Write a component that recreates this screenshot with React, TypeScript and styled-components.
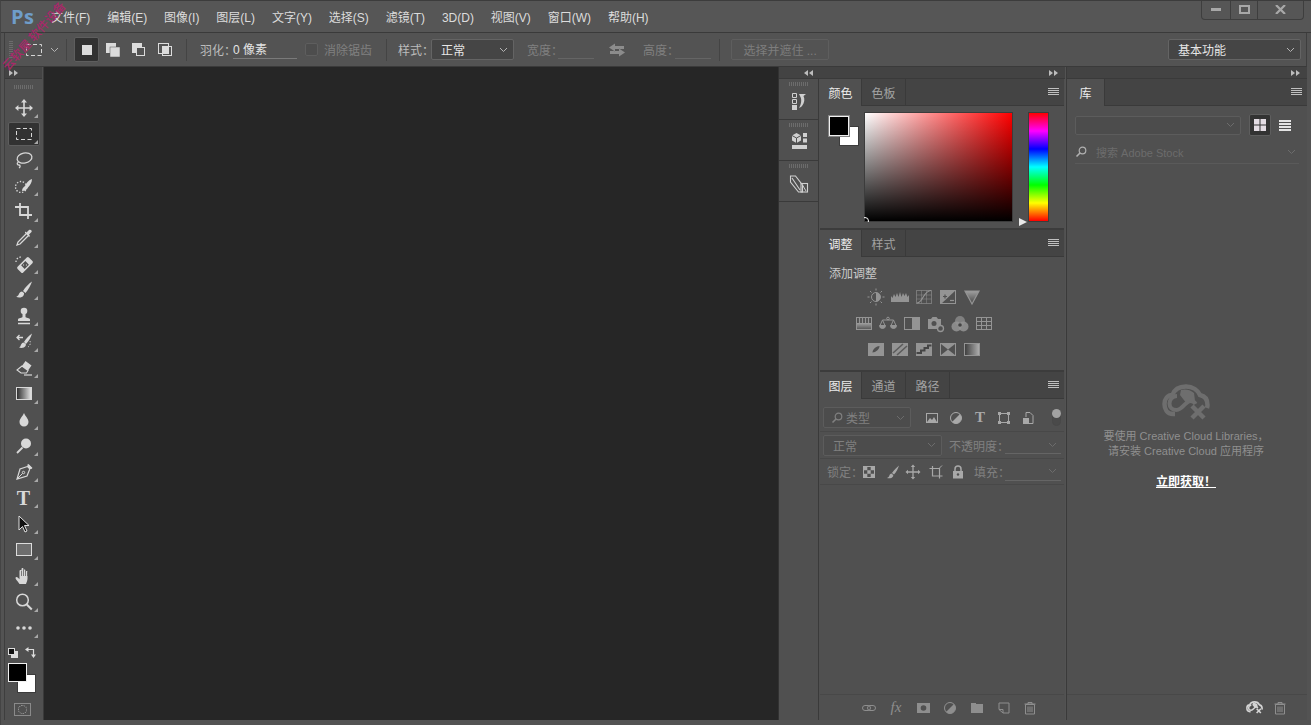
import React from "react";
import styled, { createGlobalStyle } from "styled-components";

const GlobalStyle = createGlobalStyle`
  html, body {
    margin: 0;
    padding: 0;
    background: #535353;
  }
  * {
    box-sizing: border-box;
  }
`;

const uiFont = `"Liberation Sans", "Noto Sans CJK SC", sans-serif`;
const panelBg = "#505050";

const Window = styled.div`
  position: relative;
  width: 1311px;
  height: 725px;
  overflow: hidden;
  display: flex;
  flex-direction: column;
  background: #535353;
  border-top: 1px solid #3c3c3c;
  border-left: 1px solid #444;
  font-family: ${uiFont};
  font-size: 12px;
  color: #d6d6d6;
`;

const Watermark = styled.div<{ $x: number; $y: number }>`
  position: absolute;
  left: ${(p) => p.$x}px;
  top: ${(p) => p.$y}px;
  transform: rotate(-48deg);
  transform-origin: left center;
  font-size: 12px;
  font-weight: 500;
  white-space: nowrap;
  color: #a8286a;
  z-index: 5;
`;

const TitleBar = styled.div`
  position: relative;
  height: 32px;
  flex: none;
  display: flex;
  align-items: center;
  padding-left: 10px;
  border-bottom: 1px solid #3a3a3a;
  background: #565656;
`;

const Logo = styled.span`
  width: 40px;
  font-family: "Open Sans", "Liberation Sans", sans-serif;
  font-size: 20px;
  font-weight: 700;
  letter-spacing: 0.5px;
  color: #6f9dc9;
`;

const Menu = styled.nav`
  display: flex;
  align-items: baseline;
  gap: 16.9px;
  color: #dcdcdc;
`;

const WindowControls = styled.div`
  position: absolute;
  top: -1px;
  right: 7px;
  display: flex;
  height: 20px;
  border: 1px solid #3e3e3e;
  border-top: 0;
  border-radius: 0 0 4px 4px;
`;

const WindowControl = styled.div<{ $w: number }>`
  width: ${(p) => p.$w}px;
  display: flex;
  align-items: center;
  justify-content: center;
  color: #a8a8a8;
  & + & {
    border-left: 1px solid #3e3e3e;
  }
`;

const OptionsBar = styled.div`
  height: 34px;
  flex: none;
  margin: 0 4px 0 3px;
  display: flex;
  align-items: center;
  padding-left: 4px;
  border-left: 1px solid #3e3e3e;
  border-right: 1px solid #3e3e3e;
  border-bottom: 1px solid #3a3a3a;
  background: #535353;
  position: relative;
`;

const Grip = styled.div<{ $vertical?: boolean }>`
  flex: none;
  background-image: repeating-linear-gradient(
    ${(p) => (p.$vertical ? "to bottom" : "to right")},
    #6c6c6c 0 1px,
    transparent 1px 2px
  );
  width: ${(p) => (p.$vertical ? "4px" : "20px")};
  height: ${(p) => (p.$vertical ? "17px" : "4px")};
`;

const Spaced = styled.div<{ $left: number; $w?: number }>`
  flex: none;
  margin-left: ${(p) => p.$left}px;
  width: ${(p) => (p.$w ? `${p.$w}px` : "auto")};
  display: flex;
  align-items: center;
  justify-content: center;
`;

const Separator = styled.div<{ $left: number }>`
  flex: none;
  width: 1px;
  height: 22px;
  margin-left: ${(p) => p.$left}px;
  background: #444;
`;

const ModeButton = styled.div<{ $active?: boolean; $left: number }>`
  width: ${(p) => (p.$active ? 25 : 26)}px;
  height: 25px;
  flex: none;
  margin-left: ${(p) => p.$left}px;
  display: flex;
  align-items: center;
  justify-content: center;
  color: #dcdcdc;
  border-radius: 2px;
  background: ${(p) => (p.$active ? "#323232" : "transparent")};
  border: 1px solid ${(p) => (p.$active ? "#5e5e5e" : "transparent")};
`;

const Label = styled.span<{ $left?: number; $dim?: boolean }>`
  flex: none;
  margin-left: ${(p) => p.$left ?? 0}px;
  color: ${(p) => (p.$dim ? "#808080" : "#bcbcbc")};
  white-space: nowrap;
`;

const UnderInput = styled.div<{ $w: number; $left: number; $dim?: boolean }>`
  flex: none;
  width: ${(p) => p.$w}px;
  height: 18px;
  margin-left: ${(p) => p.$left}px;
  line-height: 19px;
  color: #e4e4e4;
  border-bottom: 1px solid ${(p) => (p.$dim ? "#656565" : "#7a7a7a")};
`;

const ChevronInput = styled(UnderInput)`
  display: flex;
  justify-content: flex-end;
  align-items: center;
  padding-right: 4px;
`;

const Checkbox = styled.div<{ $left: number }>`
  flex: none;
  width: 13px;
  height: 13px;
  margin-left: ${(p) => p.$left}px;
  border: 1px solid #5e5e5e;
  border-radius: 2px;
  background: #4d4d4d;
`;

const Select = styled.div<{ $w: number; $left?: number; $h?: number; $dim?: boolean; $pad?: number }>`
  flex: none;
  width: ${(p) => p.$w}px;
  height: ${(p) => p.$h ?? 21}px;
  margin-left: ${(p) => p.$left ?? 0}px;
  padding: 0 5px 0 ${(p) => p.$pad ?? 9}px;
  display: flex;
  align-items: center;
  justify-content: space-between;
  color: ${(p) => (p.$dim ? "#808080" : "#e6e6e6")};
  background: ${(p) => (p.$dim ? "#4c4c4c" : "#454545")};
  border: 1px solid ${(p) => (p.$dim ? "#5c5c5c" : "#646464")};
  border-radius: 2px;
`;

const GhostButton = styled.div`
  flex: none;
  width: 98px;
  height: 21px;
  margin-left: 11px;
  display: flex;
  align-items: center;
  justify-content: center;
  color: #7d7d7d;
  border: 1px solid #5e5e5e;
  border-radius: 2px;
`;

const WorkspaceSelect = styled(Select)`
  margin-left: auto;
  margin-right: 5px;
`;

const Body = styled.div`
  height: 653px;
  flex: none;
  margin: 0 4px 0 3px;
  display: flex;
  border-left: 1px solid #3e3e3e;
`;

const ToolColumn = styled.div`
  width: 39px;
  flex: none;
  display: flex;
  flex-direction: column;
  align-items: center;
  padding-right: 1px;
  border-right: 1px solid #3a3a3a;
  background: ${panelBg};
`;

const DockStrip = styled.div<{ $align?: string; $left?: number }>`
  height: 12px;
  width: 100%;
  flex: none;
  display: flex;
  align-items: center;
  justify-content: ${(p) => p.$align ?? "flex-end"};
  padding: 0 7px 0 ${(p) => p.$left ?? 4}px;
  background: #434343;
  border-bottom: 1px solid #3a3a3a;
  color: #bdbdbd;
`;

const GripRow = styled.div`
  height: 16px;
  flex: none;
  display: flex;
  align-items: center;
  justify-content: center;
  width: 100%;
`;

const ToolButton = styled.div<{ $active?: boolean }>`
  position: relative;
  width: 32px;
  height: 24px;
  margin: 1px 0;
  flex: none;
  display: flex;
  align-items: center;
  justify-content: center;
  color: #d8d8d8;
  border-radius: 2px;
  background: ${(p) => (p.$active ? "#323232" : "transparent")};
  border: 1px solid ${(p) => (p.$active ? "#5e5e5e" : "transparent")};
  &::after {
    content: "";
    position: absolute;
    right: 1px;
    bottom: 1px;
    border-style: solid;
    border-width: 0 0 4px 4px;
    border-color: transparent transparent #a8a8a8 transparent;
  }
`;

const TypeGlyph = styled.span<{ $size?: number }>`
  font-family: "Liberation Serif", serif;
  font-size: ${(p) => p.$size ?? 20}px;
  font-weight: 700;
  line-height: 1;
`;

const SwapRow = styled.div`
  width: 100%;
  height: 21px;
  margin-top: 1px;
  padding: 0 6px 0 3px;
  flex: none;
  display: flex;
  align-items: center;
  justify-content: space-between;
`;

const SwatchStack = styled.div`
  position: relative;
  width: 30px;
  height: 31px;
  flex: none;
  margin: 0 0 0 -5px;
`;

const Swatch = styled.div<{ $bg: string; $x: number; $y: number; $size: number; $edge: string; $halo?: boolean }>`
  position: absolute;
  left: ${(p) => p.$x}px;
  top: ${(p) => p.$y}px;
  width: ${(p) => p.$size}px;
  height: ${(p) => p.$size}px;
  background: ${(p) => p.$bg};
  border: 1px solid ${(p) => p.$edge};
  box-shadow: ${(p) => (p.$halo ? "0 0 0 1px #858585" : "none")};
`;

const QuickMask = styled.div`
  width: 17px;
  height: 13px;
  flex: none;
  margin: 9px 3px 0 0;
  display: flex;
  align-items: center;
  justify-content: center;
  border: 1px solid #8a8a8a;
  & > div {
    width: 9px;
    height: 9px;
    border: 1px dotted #a8a8a8;
    border-radius: 50%;
  }
`;

const Canvas = styled.div`
  width: 735px;
  flex: none;
  background: #262626;
  border-right: 1px solid #323232;
`;

const DockGroup = styled.div<{ $w: number; $split?: boolean }>`
  width: ${(p) => p.$w}px;
  flex: none;
  display: flex;
  flex-direction: column;
  background: ${panelBg};
  margin-left: ${(p) => (p.$split ? 1 : 0)}px;
  border-left: ${(p) => (p.$split ? "1px solid #3a3a3a" : "0")};
`;

const DockRow = styled.div`
  flex: 1;
  display: flex;
  min-height: 0;
`;

const IconColumn = styled.div`
  width: 40px;
  flex: none;
  display: flex;
  flex-direction: column;
  border-right: 1px solid #3a3a3a;
`;

const IconCell = styled.div<{ $gap: number }>`
  height: 41px;
  flex: none;
  display: flex;
  flex-direction: column;
  align-items: center;
  border-bottom: 1px solid #3a3a3a;
  padding-top: 3px;
  color: #d0d0d0;
  & > svg {
    margin-top: ${(p) => p.$gap}px;
  }
`;

const PanelStack = styled.div`
  width: 244px;
  margin-left: 1px;
  flex: none;
  display: flex;
  flex-direction: column;
  gap: 2px;
  background: #3c3c3c;
`;

const Panel = styled.section<{ $h?: number }>`
  flex: ${(p) => (p.$h ? `0 0 ${p.$h}px` : "1")};
  min-height: 0;
  display: flex;
  flex-direction: column;
  background: ${panelBg};
`;

const TabStrip = styled.div`
  height: 27px;
  flex: none;
  display: flex;
  align-items: stretch;
  background: #444;
  border-bottom: 1px solid #3a3a3a;
`;

const Tab = styled.div<{ $active?: boolean; $w?: number }>`
  width: ${(p) => p.$w ?? (p.$active ? 42 : 44)}px;
  height: ${(p) => (p.$active ? 27 : 26)}px;
  flex: none;
  display: flex;
  align-items: center;
  justify-content: center;
  color: ${(p) => (p.$active ? "#ececec" : "#a2a2a2")};
  background: ${(p) => (p.$active ? panelBg : "transparent")};
  border-right: 1px solid #3a3a3a;
`;

const MenuButton = styled.div`
  margin-left: auto;
  width: 22px;
  display: flex;
  align-items: center;
  justify-content: center;
  color: #c0c0c0;
`;

const ColorBody = styled.div`
  flex: 1;
  display: flex;
  align-items: flex-start;
  padding: 6px 0 0 9px;
`;

const ColorSwatches = styled.div`
  position: relative;
  width: 29px;
  height: 34px;
  margin-top: 4px;
  flex: none;
`;

const ColorField = styled.div`
  position: relative;
  width: 149px;
  height: 110px;
  flex: none;
  margin-left: 6px;
  background: linear-gradient(to top, #000, rgba(0, 0, 0, 0)), linear-gradient(to right, #fff, #f00);
  border: 1px solid #3c3c3c;
`;

const FieldPicker = styled.div`
  position: absolute;
  left: -4px;
  bottom: -4px;
  width: 8px;
  height: 8px;
  border: 1px solid #fff;
  border-radius: 50%;
  clip-path: inset(0 0 3px 3px);
`;

const HueBar = styled.div`
  position: relative;
  width: 21px;
  height: 110px;
  flex: none;
  margin-left: 15px;
  border: 1px solid #3c3c3c;
  background: linear-gradient(to bottom, #f00, #f0f, #00f, #0ff, #0f0, #ff0, #f00);
`;

const HuePicker = styled.div`
  position: absolute;
  left: -10px;
  bottom: -5px;
  border-style: solid;
  border-width: 4px 0 4px 8px;
  border-color: transparent transparent transparent #e8e8e8;
`;

const AdjustTitle = styled.div`
  padding: 7px 0 0 9px;
  height: 27px;
  flex: none;
  color: #cacaca;
`;

const AdjustRow = styled.div`
  width: 208px;
  height: 26.5px;
  flex: none;
  display: flex;
  align-items: center;
  justify-content: center;
  color: #949494;
`;

const AdjustIcon = styled.div`
  width: 24px;
  display: flex;
  justify-content: center;
`;

const LayerRow = styled.div<{ $h: number; $top?: number }>`
  height: ${(p) => p.$h}px;
  flex: none;
  display: flex;
  align-items: center;
  padding: ${(p) => p.$top ?? 0}px 0 0 3px;
  color: #a8a8a8;
  border-bottom: 1px solid #484848;
`;

const FilterIcon = styled.div<{ $left?: number }>`
  width: 24px;
  flex: none;
  margin-left: ${(p) => p.$left ?? 0}px;
  display: flex;
  justify-content: center;
  color: #a8a8a8;
`;

const Toggle = styled.div`
  position: relative;
  width: 9px;
  height: 17px;
  margin-left: 12px;
  border: 1px solid #484848;
  border-radius: 5px;
  background: #4a4a4a;
  &::before {
    content: "";
    position: absolute;
    top: -1px;
    left: -1px;
    width: 9px;
    height: 9px;
    border-radius: 50%;
    background: #a2a2a2;
  }
`;

const Spacer = styled.div`
  flex: 1;
`;

const PanelFooter = styled.div<{ $pad: number; $gap: number }>`
  height: 26px;
  flex: none;
  display: flex;
  align-items: center;
  justify-content: flex-end;
  gap: ${(p) => p.$gap}px;
  padding-right: ${(p) => p.$pad}px;
  border-top: 1px solid #484848;
  color: #8e8e8e;
`;

const FooterFx = styled.span`
  width: 16px;
  text-align: center;
  font-family: "Liberation Serif", serif;
  font-size: 15px;
  font-style: italic;
`;

const LibraryBody = styled.div`
  flex: 1;
  display: flex;
  flex-direction: column;
  padding: 8px 8px 0 8px;
  min-height: 0;
`;

const LibraryTop = styled.div`
  display: flex;
  align-items: center;
  height: 22px;
  flex: none;
`;

const ViewButton = styled.div<{ $active?: boolean; $left: number }>`
  width: 22px;
  height: 22px;
  flex: none;
  margin-left: ${(p) => p.$left}px;
  display: flex;
  align-items: center;
  justify-content: center;
  color: #e6e6e6;
  border-radius: 2px;
  background: ${(p) => (p.$active ? "#333" : "transparent")};
  border: 1px solid ${(p) => (p.$active ? "#5e5e5e" : "transparent")};
`;

const StockSearch = styled.div`
  height: 23px;
  margin-top: 5px;
  width: 224px;
  flex: none;
  display: flex;
  align-items: center;
  padding-right: 3px;
  color: #6c6c6c;
  font-size: 11px;
  border-bottom: 1px solid #5a5a5a;
  & > svg:first-child {
    color: #b0b0b0;
  }
`;

const StockText = styled.span`
  margin-left: 9px;
  flex: 1;
`;

const EmptyLibrary = styled.div`
  flex: 1;
  display: flex;
  flex-direction: column;
  align-items: center;
  padding-top: 220px;
  margin-right: 2px;
  color: #8f8f8f;
  font-size: 11px;
  line-height: 15px;
  text-align: center;
`;

const CloudBox = styled.div<{ $tone: string }>`
  color: ${(p) => p.$tone};
`;

const EmptyText = styled.div`
  margin-top: 9px;
  white-space: nowrap;
`;

const GetLink = styled.a`
  margin-top: 16px;
  font-size: 12px;
  font-weight: 700;
  color: #fff;
  text-decoration: underline;
`;

type GlyphProps = { s?: number; w?: number; children: React.ReactNode };

const G = ({ s = 20, w, children }: GlyphProps) => (
  <svg
    width={w ?? s}
    height={s}
    viewBox={`0 0 ${w ?? s} ${s}`}
    fill="none"
    stroke="currentColor"
    strokeWidth={1}
    style={{ display: "block", flex: "none" }}
  >
    {children}
  </svg>
);

const Chevron = ({ dim }: { dim?: boolean }) => (
  <svg width="9" height="6" viewBox="0 0 9 6" fill="none" stroke={dim ? "#6c6c6c" : "#b4b4b4"} style={{ flex: "none" }}>
    <path d="M1 1l3.5 3.5L8 1" />
  </svg>
);

const Collapse = ({ left }: { left?: boolean }) => (
  <svg width="9" height="6" viewBox="0 0 9 6" fill="currentColor" style={{ flex: "none" }}>
    {left ? <path d="M4 0v6L0 3zM9 0v6L5 3z" /> : <path d="M0 0v6l4-3zM5 0v6l4-3z" />}
  </svg>
);

const Hamburger = () => (
  <svg width="11" height="8" viewBox="0 0 11 8" fill="none" stroke="currentColor">
    <path d="M0 .5h11M0 2.500h11M0 4.500h11M0 6.500h11" />
  </svg>
);

const Marquee = () => (
  <G s={18}>
    <rect x="1.5" y="3.5" width="15" height="11" strokeDasharray="4 2.5" />
  </G>
);

const f = "currentColor";

const tools: { key: string; icon: React.ReactNode; active?: boolean }[] = [
  {
    key: "move",
    icon: (
      <G>
        <path d="M10 3v14M3 10h14" strokeWidth={1.6} />
        <path d="M10 1l3 3.4H7zM10 19l3-3.4H7zM1 10l3.4-3v6zM19 10l-3.4-3v6z" fill={f} stroke="none" />
      </G>
    ),
  },
  { key: "marquee", active: true, icon: <Marquee /> },
  {
    key: "lasso",
    icon: (
      <G>
        <ellipse cx="10.5" cy="8" rx="7.5" ry="5" strokeWidth={1.3} transform="rotate(-12 10.5 8)" />
        <path d="M4.5 12c-2 1-1.5 3 .5 3 1.5 0 1.5 2 0 3" strokeWidth={1.3} />
      </G>
    ),
  },
  {
    key: "quick",
    icon: (
      <G>
        <circle cx="7" cy="11" r="5.5" strokeDasharray="1.4 1.6" strokeWidth={1.3} />
        <path d="M18 3c-3 1-6 4-7 7-1 1-3 2-3 5 3 0 5-1.5 6-3.5 2-2 4-5 4-8.500z" fill={f} stroke="none" />
      </G>
    ),
  },
  {
    key: "crop",
    icon: (
      <G>
        <path d="M6 2v12h12M1 6h13v12" strokeWidth={1.8} transform="translate(0 -1)" />
      </G>
    ),
  },
  {
    key: "dropper",
    icon: (
      <G>
        <path d="M12 6L4 14l-1 3 3-1 8-8" strokeWidth={1.3} />
        <path d="M11 5l4 4 1-1-1-1.500 2.500-2.500c1-1.500-1-3-2.500-2L12.500 4.500 11 3.500z" fill={f} stroke="none" />
      </G>
    ),
  },
  {
    key: "heal",
    icon: (
      <G>
        <g transform="rotate(-45 11 11)">
          <rect x="3" y="7" width="16" height="8" rx="1.500" fill={f} stroke="none" />
          <rect x="8" y="8.500" width="6" height="5" fill={panelBg} stroke="none" />
          <path d="M9.500 9.500h1v1h-1zM11.500 11.500h1v1h-1z" fill={f} stroke="none" />
        </g>
        <path d="M2 8a5 5 0 0 1 5-5" strokeDasharray="1.400 1.600" strokeWidth={1.3} />
      </G>
    ),
  },
  {
    key: "brush",
    icon: (
      <G>
        <path d="M18 1.500c-3 2-7 6-9 9.500l2.500 2C14 10 17 5 18 1.500zM8 11.500c-2.500.5-3 2.500-3.500 3.500-.4.800-1.500 1.500-2.500 1.500 2 1.500 6 1.500 7.500-1 .6-1 .6-2 .5-2.500z" fill={f} stroke="none" />
      </G>
    ),
  },
  {
    key: "stamp",
    icon: (
      <G>
        <circle cx="10" cy="5" r="3.300" fill={f} stroke="none" />
        <path d="M8.500 7.500h3v3.500c0 1 4.500 1 4.500 2.500V15H4v-1.500c0-1.500 4.500-1.500 4.500-2.500z" fill={f} stroke="none" />
        <path d="M4 17.500h12" strokeWidth={1.500} />
      </G>
    ),
  },
  {
    key: "history",
    icon: (
      <G>
        <path d="M18 1.500c-3 2-6 5-8 8.500l2 2c3-3 5-7 6-10.500zM9.500 10.500c-2 .5-2.500 2-3 3.500-.3.800-.8 1-1.500 1.500 2 1 5.500.5 6.500-1.500.4-.8.400-1.500.3-2z" fill={f} stroke="none" />
        <path d="M9 5.500H3.500M5.500 3L3 5.500 5.500 8" strokeWidth={1.300} />
        <path d="M16 9a5 5 0 0 1-2 6" strokeDasharray="1.300 1.500" />
      </G>
    ),
  },
  {
    key: "eraser",
    icon: (
      <G>
        <path d="M11.500 3l6 4.500-3.500 5-6-4.500z" fill={f} stroke="none" />
        <path d="M8 8l6 4.500-1.500 2.500H7L3 12z" strokeWidth={1.100} />
        <path d="M10 17h8" strokeWidth={1.200} />
      </G>
    ),
  },
  {
    key: "gradient",
    icon: (
      <G>
        <defs>
          <linearGradient id="toolGrad" x1="0" x2="1" y1="0" y2="0">
            <stop offset="0" stopColor="#2a2a2a" />
            <stop offset="1" stopColor="#e8e8e8" />
          </linearGradient>
        </defs>
        <rect x="2.500" y="3.500" width="15" height="12" fill="url(#toolGrad)" stroke="#d8d8d8" />
      </G>
    ),
  },
  {
    key: "blur",
    icon: (
      <G>
        <path d="M10 3c-1 3-4.500 5.500-4.500 9a4.500 4.500 0 0 0 9 0C14.500 8.500 11 6 10 3z" fill={f} stroke="none" />
      </G>
    ),
  },
  {
    key: "dodge",
    icon: (
      <G>
        <circle cx="12" cy="7.500" r="5" fill={f} stroke="none" />
        <path d="M8.500 11.500L3 17" strokeWidth={1.800} />
      </G>
    ),
  },
  {
    key: "pen",
    icon: (
      <G>
        <path d="M14.500 3.500l3 3M14 5l2 2M13.500 4.500L6 7 3 17l10-3 3-7.500z" strokeWidth={1.200} />
        <path d="M3.500 16.500L8.500 11.500" />
        <circle cx="9.500" cy="10.500" r="1.200" />
        <path d="M14.500 2l4 4-1.500 1-4-4z" fill={f} stroke="none" />
      </G>
    ),
  },
  { key: "type", icon: <TypeGlyph>T</TypeGlyph> },
  {
    key: "path",
    icon: (
      <G>
        <path d="M5 2v14l3.500-3.500L11 18l2-1-2.500-5.500H15z" fill="#111" stroke="#e0e0e0" />
      </G>
    ),
  },
  {
    key: "shape",
    icon: (
      <G>
        <rect x="2.500" y="3.500" width="15" height="12" fill="#6e6e6e" stroke="#dcdcdc" />
      </G>
    ),
  },
  {
    key: "hand",
    icon: (
      <G>
        <path d="M5.500 18c-1-2-4-4.500-4-6 0-1.200 1.500-1.200 2.500-.3l1.500 1.500V5c0-1.500 2-1.500 2 0V3c0-1.500 2-1.500 2 0v1.500c0-1.500 2-1.500 2 0V6c0-1.500 2-1.500 2 0v6.500c0 2-1 4-1.500 5.500z" fill={f} stroke="none" />
        <path d="M7.500 5v5M9.500 3.500v6.500M11.500 4.500v5.500M13.500 6v4" stroke={panelBg} strokeWidth={0.700} />
      </G>
    ),
  },
  {
    key: "zoom",
    icon: (
      <G>
        <circle cx="8.500" cy="8" r="5.800" strokeWidth={1.500} />
        <path d="M12.800 12.500l5 5" strokeWidth={2} />
      </G>
    ),
  },
  {
    key: "more",
    icon: (
      <G>
        <circle cx="4" cy="10" r="1.800" fill={f} stroke="none" />
        <circle cx="10" cy="10" r="1.800" fill={f} stroke="none" />
        <circle cx="16" cy="10" r="1.800" fill={f} stroke="none" />
      </G>
    ),
  },
];

const adjustRows: { key: string; icon: React.ReactNode }[][] = [
  [
    {
      key: "brightness",
      icon: (
        <G>
          <circle cx="10" cy="10" r="4.500" />
          <path d="M10 5.500a4.500 4.500 0 0 1 0 9z" fill={f} stroke="none" />
          <path d="M10 1.500v2M10 16.500v2M1.500 10h2M16.500 10h2M4 4l1.500 1.500M14.500 14.500L16 16M4 16l1.500-1.500M14.500 5.500L16 4" />
        </G>
      ),
    },
    {
      key: "levels",
      icon: (
        <G>
          <path d="M1 15V9l1.500 2L4 7l1.500 3L7 6l1.500 4L10 5l1.500 5L13 6l1.500 3L16 6l1.500 4 1.500-2v7z" fill={f} stroke="none" />
        </G>
      ),
    },
    {
      key: "curves",
      icon: (
        <G>
          <rect x="2.500" y="3.500" width="15" height="13" strokeOpacity={0.6} />
          <path d="M2.500 8h15M2.500 12h15M7.500 3.500v13M12.500 3.500v13" strokeOpacity={0.45} />
          <path d="M3 16c6 0 6-12 14-12.500" strokeWidth={1.200} />
        </G>
      ),
    },
    {
      key: "exposure",
      icon: (
        <G>
          <rect x="2.500" y="3.500" width="15" height="13" />
          <path d="M3 3h15L3 17z" fill={f} stroke="none" />
          <path d="M5 9.500h4M7 7.500v4" stroke={panelBg} strokeWidth={1.200} />
          <path d="M12 13.500h4" strokeWidth={1.200} />
        </G>
      ),
    },
    {
      key: "vibrance",
      icon: (
        <G>
          <defs>
            <linearGradient id="vibGrad" x1="0" x2="0" y1="0" y2="1">
              <stop offset="0" stopColor="#a0a0a0" />
              <stop offset="1" stopColor="#444" />
            </linearGradient>
          </defs>
          <path d="M3 4h14l-7 13z" stroke={f} strokeWidth={1.200} fill="url(#vibGrad)" />
        </G>
      ),
    },
  ],
  [
    {
      key: "hsl",
      icon: (
        <G>
          <defs>
            <linearGradient id="hslGrad" x1="0" x2="0" y1="0" y2="1">
              <stop offset="0" stopColor="#a0a0a0" />
              <stop offset="1" stopColor="#5a5a5a" />
            </linearGradient>
          </defs>
          <rect x="2.500" y="3.500" width="15" height="12" />
          <rect x="3" y="9" width="14" height="6" fill="url(#hslGrad)" stroke="none" />
          <path d="M5.500 4v5M8.500 4v5M11.500 4v5M14.500 4v5" strokeWidth={1.200} />
        </G>
      ),
    },
    {
      key: "balance",
      icon: (
        <G>
          <circle cx="10" cy="4.500" r="1.300" />
          <path d="M4.500 6h11M4.500 6L2 11.500M4.500 6L7 11.500M15.500 6L13 11.500M15.500 6L18 11.500" />
          <path d="M1.500 11.500h6a3 3 0 0 1-6 0zM12.500 11.500h6a3 3 0 0 1-6 0z" fill={f} />
        </G>
      ),
    },
    {
      key: "bw",
      icon: (
        <G>
          <rect x="2.500" y="3.500" width="15" height="12" />
          <rect x="10" y="3.500" width="7.500" height="12" fill={f} stroke="none" />
        </G>
      ),
    },
    {
      key: "photo",
      icon: (
        <G>
          <path d="M2 5h3l1.500-2h4L12 5h3v6.500c-1 0-3 .8-3 3.500H2z" fill={f} stroke="none" />
          <circle cx="8" cy="9.500" r="2.500" fill={panelBg} stroke="none" />
          <circle cx="14.500" cy="14.500" r="3" strokeWidth={1.300} />
        </G>
      ),
    },
    {
      key: "mixer",
      icon: (
        <G>
          <circle cx="10" cy="7" r="5" fill={f} fillOpacity={0.7} stroke="none" />
          <circle cx="6.500" cy="12.500" r="5" fill={f} fillOpacity={0.85} stroke="none" />
          <circle cx="13.500" cy="12.500" r="5" fill={f} fillOpacity={0.85} stroke="none" />
          <circle cx="10" cy="11" r="1.800" fill="#444" stroke="none" />
        </G>
      ),
    },
    {
      key: "lookup",
      icon: (
        <G>
          <rect x="2.500" y="3.500" width="15" height="12" />
          <path d="M2.500 7.500h15M2.500 11.500h15M7.500 3.500v12M12.500 3.500v12" />
        </G>
      ),
    },
  ],
  [
    {
      key: "invert",
      icon: (
        <G>
          <rect x="2" y="3" width="16" height="13" fill={f} stroke="none" />
          <path d="M13.500 6c-3 0-7 3-7 6.500 3 0 7-3 7-6.500z" fill={panelBg} stroke="none" />
        </G>
      ),
    },
    {
      key: "posterize",
      icon: (
        <G>
          <rect x="2" y="3" width="16" height="13" fill={f} stroke="none" />
          <path d="M3 13L13 4M7 15l10-9" stroke="#5c5c5c" strokeWidth={1.600} />
        </G>
      ),
    },
    {
      key: "threshold",
      icon: (
        <G>
          <rect x="2" y="3" width="16" height="13" fill={f} stroke="none" />
          <path d="M2.500 13H7V10.500h3.500V8H14V5.500h3.500" stroke="#454545" strokeWidth={2} />
        </G>
      ),
    },
    {
      key: "selective",
      icon: (
        <G>
          <rect x="2.500" y="3.500" width="15" height="12" />
          <path d="M3 4l7 5.500L17 4zM3 15l7-5.500L17 15z" fill={f} stroke="none" />
        </G>
      ),
    },
    {
      key: "gradmap",
      icon: (
        <G>
          <defs>
            <linearGradient id="mapGrad" x1="0" x2="1" y1="0" y2="0">
              <stop offset="0" stopColor="#3c3c3c" />
              <stop offset="1" stopColor="#b0b0b0" />
            </linearGradient>
          </defs>
          <rect x="2.500" y="3.500" width="15" height="12" fill="url(#mapGrad)" />
        </G>
      ),
    },
  ],
];

const SearchIcon = () => (
  <G s={12}>
    <circle cx="7.500" cy="4.500" r="3.300" strokeWidth={1.200} />
    <path d="M5 7l-3.500 3.500" strokeWidth={1.600} />
  </G>
);

const Trash = () => (
  <G s={14}>
    <path d="M1.500 3h11M5 3V1.500h4V3M2.500 3.500h9v9.500h-9zM5 5.500V11M7 5.500V11M9 5.500V11" />
  </G>
);

const CloudX = ({ size }: { size: number }) => (
  <svg width={size} height={size * 0.75} viewBox="0 0 48 36" fill="none" stroke="currentColor" style={{ display: "block" }}>
    <path d="M13 30H11C5 30 2.500 25 2.500 20s3-9 8-9c2-6 7-8.500 13.500-8.500 7 0 12 4 14 8.500 5 1 7.500 5 7.500 10 0 1-.2 2-.5 3" strokeWidth={4.500} />
    <path d="M15 12c-5 0-7.500 4-7.500 7.500S10 26 14.500 26c6 0 9-9 14-9 2 0 4 1 5 3" strokeWidth={4} />
    <path d="M30 22l12 12M42 22L30 34" strokeWidth={4.500} />
    <path d="M19 6c3-1 9-1 13 3l1 8c-3-.5-6 1-8 3l-7-9z" fill="currentColor" stroke="none" />
  </svg>
);

const menuItems = ["文件(F)", "编辑(E)", "图像(I)", "图层(L)", "文字(Y)", "选择(S)", "滤镜(T)", "3D(D)", "视图(V)", "窗口(W)", "帮助(H)"];

const App = () => (
  <Window>
    <GlobalStyle />
    <Watermark $x={3} $y={58}>云软屋</Watermark>
    <Watermark $x={29} $y={29}>软件设备</Watermark>
    <TitleBar>
      <Logo>Ps</Logo>
      <Menu>
        {menuItems.map((m) => (
          <span key={m}>{m}</span>
        ))}
      </Menu>
      <WindowControls>
        <WindowControl $w={28}>
          <svg width="10" height="3"><rect width="10" height="3" fill="currentColor" /></svg>
        </WindowControl>
        <WindowControl $w={27}>
          <svg width="11" height="9" fill="none" stroke="currentColor" strokeWidth="2"><rect x="1" y="1" width="9" height="7" /></svg>
        </WindowControl>
        <WindowControl $w={46}>
          <svg width="11" height="9" fill="none" stroke="currentColor" strokeWidth="2.200"><path d="M1 0l9 9M10 0L1 9" /></svg>
        </WindowControl>
      </WindowControls>
    </TitleBar>

    <OptionsBar>
      <Grip $vertical />
      <Spaced $left={12}><Marquee /></Spaced>
      <Spaced $left={7}><Chevron /></Spaced>
      <Separator $left={7} />
      <ModeButton $active $left={7}>
        <svg width="10" height="10"><rect width="10" height="10" fill="currentColor" /></svg>
      </ModeButton>
      <ModeButton $left={1}>
        <svg width="15" height="14" fill="currentColor"><rect width="10" height="10" /><rect x="4" y="4" width="10" height="10" stroke="#535353" strokeWidth="0.500" /></svg>
      </ModeButton>
      <ModeButton $left={0}>
        <svg width="14" height="14"><rect width="10" height="10" fill="currentColor" /><rect x="4.500" y="4.500" width="8" height="8" fill="#535353" stroke="currentColor" /></svg>
      </ModeButton>
      <ModeButton $left={0}>
        <svg width="15" height="14" fill="none" stroke="currentColor"><rect x=".5" y=".5" width="10" height="10" /><rect x="4.500" y="3.500" width="9" height="9" /><rect x="4" y="4" width="6" height="6" fill="currentColor" stroke="none" /></svg>
      </ModeButton>
      <Separator $left={8} />
      <Label $left={13}>羽化：</Label>
      <UnderInput $w={64} $left={-3}>0 像素</UnderInput>
      <Checkbox $left={8} />
      <Label $left={6} $dim>消除锯齿</Label>
      <Separator $left={14} />
      <Label $left={11}>样式：</Label>
      <Select $w={83} $left={-3}>正常<Chevron /></Select>
      <Label $left={13} $dim>宽度：</Label>
      <UnderInput $w={36} $left={-5} $dim />
      <Spaced $left={15}>
        <svg width="16" height="14" fill="#8c8c8c"><path d="M0 4.500L6 .5V3h9v3H6v2.500zM16 9.500L10 5.500V8H1v3h9v2.500z" /></svg>
      </Spaced>
      <Label $left={18} $dim>高度：</Label>
      <UnderInput $w={36} $left={-4} $dim />
      <Separator $left={8} />
      <GhostButton>选择并遮住 ...</GhostButton>
      <WorkspaceSelect $w={133}>基本功能<Chevron /></WorkspaceSelect>
    </OptionsBar>

    <Body>
      <ToolColumn>
        <DockStrip $align="flex-start"><Collapse /></DockStrip>
        <GripRow><Grip /></GripRow>
        {tools.map((t) => (
          <ToolButton key={t.key} $active={t.active}>{t.icon}</ToolButton>
        ))}
        <SwapRow>
          <svg width="10" height="10"><rect x="3" y="3" width="7" height="7" fill="#dcdcdc" /><rect x=".5" y=".5" width="6" height="6" fill="#111" stroke="#dcdcdc" /></svg>
          <svg width="11" height="11" fill="none" stroke="#dcdcdc" strokeWidth="1.200"><path d="M2 2.500h6.500V9" /><path d="M3.500 0v5L0 2.500zM6 7.500h5L8.500 11z" fill="#dcdcdc" stroke="none" /></svg>
        </SwapRow>
        <SwatchStack>
          <Swatch $bg="#fff" $x={11} $y={11} $size={19} $edge="#3c3c3c" />
          <Swatch $bg="#000" $x={2} $y={0} $size={19} $edge="#f0f0f0" />
        </SwatchStack>
        <QuickMask><div /></QuickMask>
      </ToolColumn>

      <Canvas />

      <DockGroup $w={286}>
        <DockStrip $align="space-between" $left={25}>
          <Collapse left />
          <Collapse />
        </DockStrip>
        <DockRow>
          <IconColumn>
            <IconCell $gap={5}>
              <Grip />
              <G s={20}>
                <path d="M3.500 2.500h4v4h-4zM3.500 8.500h4v4h-4z" />
                <rect x="3" y="14" width="5" height="5" fill={f} stroke="none" />
                <path d="M10 3h7l-2.500 2c1.500 3 1 7-1.500 10-.5.500-1.500 1.500-3 2 2-3 3-8 1.500-11z" fill={f} stroke="none" />
              </G>
            </IconCell>
            <IconCell $gap={4}>
              <Grip />
              <G s={20}>
                <path d="M7.500 2L12 4.500v5L7.500 12 3 9.500v-5z" fill={f} stroke="none" />
                <path d="M3 4.500L7.500 7 12 4.500M7.500 7v5" stroke={panelBg} />
                <path d="M14 2h4v4h-4zM14 7.500h4v4h-4z" fill={f} stroke="none" />
                <rect x="3" y="14" width="15" height="4" fill={f} stroke="none" />
              </G>
            </IconCell>
            <IconCell $gap={6}>
              <Grip />
              <G s={20}>
                <path d="M1.500 2h5l7 9v7h-4l-8-10zM3 4l8 12" strokeWidth={1.100} />
                <rect x="12" y="9.500" width="6.500" height="8.500" strokeWidth={1.100} />
                <path d="M13.500 11l3.500 6" />
              </G>
            </IconCell>
          </IconColumn>

          <PanelStack>
            <Panel $h={149}>
              <TabStrip>
                <Tab $active>颜色</Tab>
                <Tab>色板</Tab>
                <MenuButton><Hamburger /></MenuButton>
              </TabStrip>
              <ColorBody>
                <ColorSwatches>
                  <Swatch $bg="#fff" $x={10} $y={10} $size={20} $edge="#3c3c3c" />
                  <Swatch $bg="#000" $x={0} $y={0} $size={20} $edge="#f0f0f0" $halo />
                </ColorSwatches>
                <ColorField><FieldPicker /></ColorField>
                <HueBar><HuePicker /></HueBar>
              </ColorBody>
            </Panel>
            <Panel $h={140}>
              <TabStrip>
                <Tab $active>调整</Tab>
                <Tab>样式</Tab>
                <MenuButton><Hamburger /></MenuButton>
              </TabStrip>
              <AdjustTitle>添加调整</AdjustTitle>
              {adjustRows.map((row, i) => (
                <AdjustRow key={i}>
                  {row.map((a) => (
                    <AdjustIcon key={a.key}>{a.icon}</AdjustIcon>
                  ))}
                </AdjustRow>
              ))}
            </Panel>
            <Panel>
              <TabStrip>
                <Tab $active>图层</Tab>
                <Tab>通道</Tab>
                <Tab>路径</Tab>
                <MenuButton><Hamburger /></MenuButton>
              </TabStrip>
              <LayerRow $h={33} $top={5}>
                <Select $w={88} $h={21} $dim $pad={7}>
                  <SearchIcon />
                  <Label $left={3} $dim>类型</Label>
                  <Spacer />
                  <Chevron dim />
                </Select>
                <FilterIcon $left={9}>
                  <G s={16}>
                    <rect x="2.500" y="3.500" width="11" height="9" />
                    <path d="M3 12l3-4 2 2 2-3 3 5z" fill={f} stroke="none" />
                  </G>
                </FilterIcon>
                <FilterIcon>
                  <G s={16}>
                    <circle cx="8" cy="8" r="5.500" fill={f} stroke="none" />
                    <path d="M4 12L12 4a5.500 5.500 0 0 0-8 8z" fill={panelBg} stroke="none" />
                    <circle cx="8" cy="8" r="5.500" />
                  </G>
                </FilterIcon>
                <FilterIcon><TypeGlyph $size={15}>T</TypeGlyph></FilterIcon>
                <FilterIcon>
                  <G s={16}>
                    <rect x="3.500" y="3.500" width="9" height="9" />
                    <path d="M2 2h3v3H2zM11 2h3v3h-3zM2 11h3v3H2zM11 11h3v3h-3z" fill={f} stroke="none" />
                  </G>
                </FilterIcon>
                <FilterIcon>
                  <G s={16}>
                    <path d="M6 2.500h4l3 3v8H9" />
                    <path d="M6 2.500V7" />
                    <rect x="3" y="8" width="6" height="6" fill={f} stroke="none" />
                  </G>
                </FilterIcon>
                <Toggle />
              </LayerRow>
              <LayerRow $h={27}>
                <Select $w={119} $h={21} $dim>正常<Chevron dim /></Select>
                <Label $left={7} $dim>不透明度：</Label>
                <ChevronInput $w={56} $left={-4} $dim>
                  <Chevron dim />
                </ChevronInput>
              </LayerRow>
              <LayerRow $h={26}>
                <Label $left={4} $dim>锁定：</Label>
                <FilterIcon $left={-6}>
                  <G s={14}>
                    <rect x="1.500" y="1.500" width="11" height="11" />
                    <path d="M2 2h3.300v3.300H2zM8.700 2H12v3.300H8.700zM5.300 5.300h3.400v3.400H5.300zM2 8.700h3.300V12H2zM8.700 8.700H12V12H8.700z" fill={f} stroke="none" />
                  </G>
                </FilterIcon>
                <FilterIcon>
                  <G s={16}>
                    <path d="M14 1.500c-2 1.500-5 4.500-7 7.500l2 1.500c2.500-2.500 4-6 5-9zM6.500 9.500c-2 .5-2 2-2.500 3-.3.600-1 1-2 1.500 2 .8 5 .3 6-1.500.3-.6.300-1.200.2-1.500z" fill={f} stroke="none" />
                  </G>
                </FilterIcon>
                <FilterIcon $left={-4}>
                  <G s={16}>
                    <path d="M8 2.500v11M2.500 8h11" strokeWidth={1.300} />
                    <path d="M8 .5l2.200 2.500H5.800zM8 15.500l2.200-2.500H5.800zM.5 8L3 5.800v4.400zM15.500 8L13 5.800v4.400z" fill={f} stroke="none" />
                  </G>
                </FilterIcon>
                <FilterIcon $left={-1}>
                  <G s={16}>
                    <path d="M4.500 2v10h10M1.500 4.500h10v10" strokeWidth={1.200} />
                    <path d="M11 4.500l3-3" />
                  </G>
                </FilterIcon>
                <FilterIcon $left={-2}>
                  <G s={16}>
                    <path d="M5 7V5a3 3 0 0 1 6 0v2" strokeWidth={1.500} />
                    <rect x="3" y="7" width="10" height="7.500" fill={f} stroke="none" />
                    <circle cx="8" cy="10.500" r="1.200" fill={panelBg} stroke="none" />
                  </G>
                </FilterIcon>
                <Label $left={4} $dim>填充：</Label>
                <ChevronInput $w={56} $left={-5} $dim>
                  <Chevron dim />
                </ChevronInput>
              </LayerRow>
              <Spacer />
              <PanelFooter $pad={27} $gap={11}>
                <G s={16}>
                  <rect x="1.500" y="5.500" width="8" height="5" rx="2.500" />
                  <rect x="6.500" y="5.500" width="8" height="5" rx="2.500" />
                </G>
                <FooterFx>fx</FooterFx>
                <G s={16}>
                  <rect x="2" y="3" width="13" height="10" fill={f} stroke="none" />
                  <circle cx="8.500" cy="8" r="2.800" fill={panelBg} stroke="none" />
                </G>
                <G s={16}>
                  <circle cx="8" cy="8" r="5.500" fill={f} stroke="none" />
                  <path d="M4 12L12 4a5.500 5.500 0 0 0-8 8z" fill={panelBg} stroke="none" />
                  <circle cx="8" cy="8" r="5.500" />
                </G>
                <G s={16}>
                  <path d="M2 3h5v1h7v9H2z" fill={f} stroke="none" />
                </G>
                <G s={16}>
                  <path d="M3 3h10v10H7L3 9.500zM7 13V9.500H3" />
                </G>
                <Trash />
              </PanelFooter>
            </Panel>
          </PanelStack>
        </DockRow>
      </DockGroup>

      <DockGroup $w={241} $split>
        <DockStrip>
          <Collapse />
        </DockStrip>
        <TabStrip>
          <Tab $active $w={38}>库</Tab>
          <MenuButton><Hamburger /></MenuButton>
        </TabStrip>
        <LibraryBody>
          <LibraryTop>
            <Select $w={166} $h={19} $dim><span /><Chevron dim /></Select>
            <ViewButton $active $left={8}>
              <svg width="12" height="12" fill="#e4dce4"><rect width="5.500" height="5.500" /><rect x="6.500" width="5.500" height="5.500" /><rect y="6.500" width="5.500" height="5.500" /><rect x="6.500" y="6.500" width="5.500" height="5.500" /></svg>
            </ViewButton>
            <ViewButton $left={3}>
              <svg width="12" height="11" fill="#e4e4e4"><rect width="12" height="2" /><rect y="3" width="12" height="2" /><rect y="6" width="12" height="2" /><rect y="9" width="12" height="2" /></svg>
            </ViewButton>
          </LibraryTop>
          <StockSearch>
            <SearchIcon />
            <StockText>搜索 Adobe Stock</StockText>
            <Chevron dim />
          </StockSearch>
          <EmptyLibrary>
            <CloudBox $tone="#6e6e6e"><CloudX size={48} /></CloudBox>
            <EmptyText>要使用 Creative Cloud Libraries，</EmptyText>
            <div>请安装 Creative Cloud 应用程序</div>
            <GetLink>立即获取！</GetLink>
          </EmptyLibrary>
        </LibraryBody>
        <PanelFooter $pad={20} $gap={10}>
          <CloudBox $tone="#d4d4d4"><CloudX size={17} /></CloudBox>
          <Trash />
        </PanelFooter>
      </DockGroup>
    </Body>
  </Window>
);

export default App;
